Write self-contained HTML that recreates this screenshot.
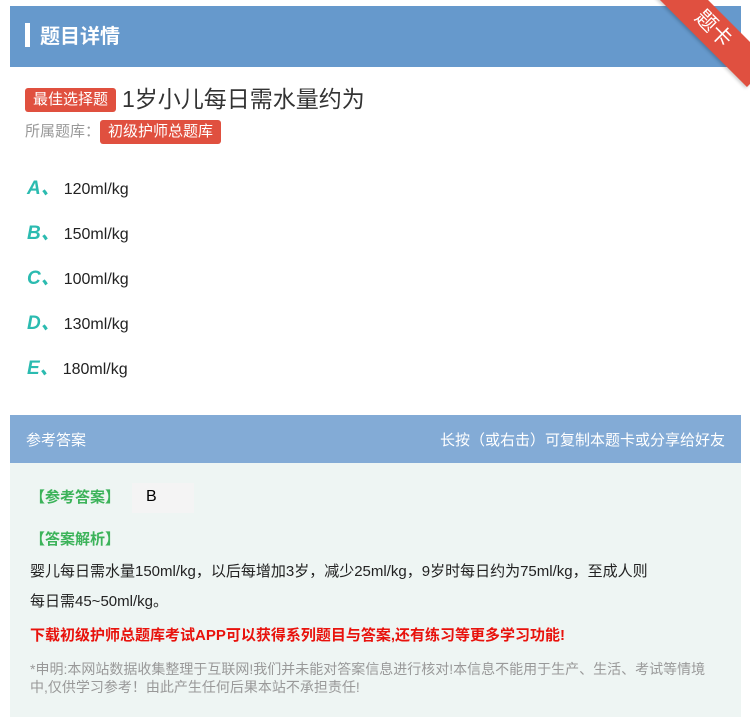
<!DOCTYPE html>
<html><head><meta charset="utf-8"><style>
body{margin:0;width:750px;height:717px;overflow:hidden;background:#fff;font-family:"Liberation Sans","Noto Sans CJK SC",sans-serif;position:relative}
.hd{position:absolute;left:10px;top:6px;width:731px;height:61px;background:#6699cc;}
.hd .bar{position:absolute;left:15px;top:17px;width:5px;height:24px;background:#fff}
.hd .t{position:absolute;left:30px;top:14px;color:#fff;font-size:20px;font-weight:bold}
.rib{position:absolute;right:-28px;top:12px;width:130px;height:34px;background:#e05040;transform:rotate(45deg);color:#fff;font-size:21px;text-align:center;line-height:34px;box-shadow:0 2px 3px rgba(0,0,0,.2)}
.tag{display:inline-block;background:#e0503f;color:#fff;border-radius:3px;font-size:15px;padding:0 8px;line-height:24px}
.q{position:absolute;left:25px;top:80px;font-size:23px;color:#333}
.q .tag{vertical-align:3px;margin-right:6px}
.lib{position:absolute;left:25px;top:120px;font-size:15px;color:#999}
.opt{position:absolute;left:27px;font-size:16px;color:#222}
.opt b{color:#2bbbb0;font-style:italic;font-size:19px;margin-right:4px}
.ah{position:absolute;left:10px;top:415px;width:731px;height:48px;background:#83abd6;color:#fff;font-size:15px}
.ab{position:absolute;left:10px;top:463px;width:731px;height:254px;background:#eef5f3}
.g{color:#3cb35a;font-weight:bold;font-size:15px;position:absolute;left:20px}
</style></head><body>
<div class="hd"><div class="bar"></div><div class="t">题目详情</div></div>
<div class="rib">题卡</div>
<div class="q"><span class="tag">最佳选择题</span>1岁小儿每日需水量约为</div>
<div class="lib">所属题库：<span class="tag">初级护师总题库</span></div>
<div class="opt" style="top:173px"><b>A、</b>120ml/kg</div>
<div class="opt" style="top:218px"><b>B、</b>150ml/kg</div>
<div class="opt" style="top:263px"><b>C、</b>100ml/kg</div>
<div class="opt" style="top:308px"><b>D、</b>130ml/kg</div>
<div class="opt" style="top:353px"><b>E、</b>180ml/kg</div>
<div class="ah"><span style="position:absolute;left:16px;top:14px">参考答案</span><span style="position:absolute;right:16px;top:14px">长按（或右击）可复制本题卡或分享给好友</span></div>
<div class="ab">
<div class="g" style="top:23px">【参考答案】</div>
<div style="position:absolute;left:122px;top:20px;width:62px;height:30px;background:#f4f4f4;font-size:16px;padding-left:14px;box-sizing:border-box;line-height:28px">B</div>
<div class="g" style="top:65px">【答案解析】</div>
<div style="position:absolute;left:20px;top:94px;width:700px;font-size:15px;line-height:30px;color:#222;white-space:nowrap">婴儿每日需水量150ml/kg，以后每增加3岁，减少25ml/kg，9岁时每日约为75ml/kg，至成人则<br>每日需45~50ml/kg。</div>
<div style="position:absolute;left:20px;top:161px;font-size:15px;font-weight:bold;color:#e8120c">下载初级护师总题库考试APP可以获得系列题目与答案,还有练习等更多学习功能!</div>
<div style="position:absolute;left:20px;top:197px;width:680px;font-size:14px;line-height:18px;color:#999">*申明:本网站数据收集整理于互联网!我们并未能对答案信息进行核对!本信息不能用于生产、生活、考试等情境中,仅供学习参考！由此产生任何后果本站不承担责任!</div>
</div>
</body></html>
